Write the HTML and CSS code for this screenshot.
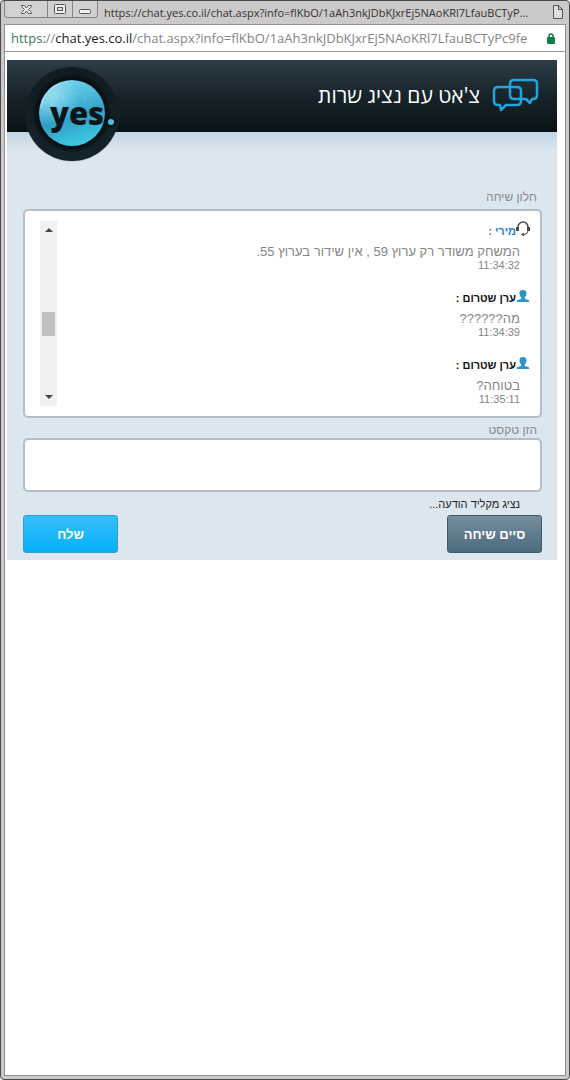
FILE: index.html
```html
<!DOCTYPE html>
<html lang="he">
<head>
  <meta charset="UTF-8">
  <title>צ'אט עם נציג שרות</title>
  <link rel="stylesheet" href="styles.css">
</head>
<body>
  <div class="window">
    <div class="titlebar">
      <div class="window-buttons">
        <button type="button" class="btn-close" aria-label="Close">
          <svg width="13" height="11" viewBox="0 0 13 11"><path d="M1.500 1.500h3l2 2.500 2-2.500h3v1l-3 3 3 3v1h-3l-2-2.500-2 2.500h-3v-1l3-3-3-3z" fill="#eee" stroke="#555"/></svg>
        </button>
        <button type="button" class="btn-max" aria-label="Maximize">
          <svg width="12" height="10" viewBox="0 0 12 10"><rect x=".5" y=".5" width="11" height="9" rx="1" fill="#eee" stroke="#555"/><rect x="3.500" y="3.500" width="5" height="3" fill="#ddd" stroke="#555"/></svg>
        </button>
        <button type="button" class="btn-min" aria-label="Minimize">
          <svg width="12" height="5" viewBox="0 0 12 5"><rect x=".5" y=".5" width="11" height="4" rx="1" fill="#eee" stroke="#555"/></svg>
        </button>
      </div>
      <span class="window-title">https://chat.yes.co.il/chat.aspx?info=flKbO/1aAh3nkJDbKJxrEj5NAoKRl7LfauBCTyP...</span>
      <svg class="page-icon" width="10" height="14" viewBox="0 0 10 14"><path d="M.5.5h5l4 4v9h-9zM5.500.5v4h4" fill="#ddd" stroke="#555"/></svg>
    </div>

    <div class="addressbar">
      <span class="url"><span class="secure">https:</span>//<span class="host">chat.yes.co.il</span>/chat.aspx?info=flKbO/1aAh3nkJDbKJxrEj5NAoKRl7LfauBCTyPc9fe</span>
      <svg class="lock" width="8" height="11" viewBox="0 0 8 11"><path d="M2 5V3a2 2 0 0 1 4 0v2" fill="none" stroke="#0b8043" stroke-width="1.500"/><rect y="4" width="8" height="7" rx="1" fill="#0b8043"/></svg>
    </div>

    <div class="viewport">
      <main class="chat" dir="rtl">
        <header class="chat-header">
          <svg class="bubbles" width="47" height="34" viewBox="0 0 47 34" fill="none" stroke="#1fa5e0" stroke-width="2.500" stroke-linejoin="round">
            <path d="M22 2h19q4 0 4 4v11q0 4-4 4h-1l-2 4-4-4H22q-4 0-4-4V6q0-4 4-4z"/>
            <path d="M6 9h19q4 0 4 4v10q0 4-4 4H14l-5 5-1-5H6q-4 0-4-4V13q0-4 4-4z"/>
          </svg>
          <h1>צ'אט עם נציג שרות</h1>
          <svg class="logo" width="100" height="100" viewBox="0 0 100 100" role="img" aria-label="yes">
            <defs>
              <linearGradient id="ring" x1="0" y1="0" x2="0" y2="1">
                <stop offset="0" stop-color="#101c21"/>
                <stop offset="1" stop-color="#14232b"/>
              </linearGradient>
              <radialGradient id="shade">
                <stop offset=".78" stop-color="#020608"/>
                <stop offset="1" stop-color="#020608" stop-opacity="0"/>
              </radialGradient>
              <linearGradient id="globe" x1=".3" y1="0" x2=".6" y2="1">
                <stop offset="0" stop-color="#79d2ed"/>
                <stop offset=".3" stop-color="#4fbcdc"/>
                <stop offset=".6" stop-color="#319fc6"/>
                <stop offset="1" stop-color="#3ecbe5"/>
              </linearGradient>
              <radialGradient id="shine" cx=".2" cy=".25" r=".4">
                <stop offset="0" stop-color="#c5f1fb" stop-opacity=".5"/>
                <stop offset="1" stop-color="#c5f1fb" stop-opacity="0"/>
              </radialGradient>
            </defs>
            <circle cx="49" cy="50" r="47" fill="#30506b" opacity=".15"/>
            <circle cx="49" cy="49" r="47" fill="url(#ring)"/>
            <circle cx="49" cy="48" r="40" fill="url(#shade)"/>
            <circle cx="49" cy="48" r="33" fill="url(#globe)"/>
            <circle cx="49" cy="48" r="33" fill="url(#shine)"/>
            <path d="M18 43A32 32 0 0 1 36 19" fill="none" stroke="#b3edfa" stroke-width="1" opacity=".8"/>
            <g fill="#b9edf8" opacity=".3">
              <circle cx="34" cy="32" r="1"/><circle cx="40" cy="33" r="1"/><circle cx="55" cy="28" r="1"/><circle cx="29" cy="39" r="1"/><circle cx="62" cy="33" r="1"/>
            </g>
            <text x="27" y="60" class="logo-text">yes</text>
            <circle cx="88" cy="57" r="6" fill="#0b151a"/>
            <circle cx="88" cy="57" r="3" fill="#4bbfe4"/>
          </svg>
        </header>

        <form class="chat-body">
          <h2 class="field-label">חלון שיחה</h2>
          <div class="log">
            <div class="messages">
              <div class="message agent">
                <div class="sender">
                  <svg width="14" height="16" viewBox="0 0 14 16" fill="none" stroke="#4a4a4a"><path d="M2 7V6a5 5 0 0 1 10 0v1" stroke-width="1.500"/><path d="M1.500 6v4M12.500 6v4" stroke-width="3"/><path d="M12 10q0 3-4 3.500" stroke-width="1"/><circle cx="7" cy="13.500" r="1" fill="#4a4a4a"/></svg>
                  <strong>מירי :</strong>
                </div>
                <p>המשחק משודר רק ערוץ 59 , אין שידור בערוץ 55.</p>
                <time>11:34:32</time>
              </div>
              <div class="message customer">
                <div class="sender">
                  <svg width="14" height="13" viewBox="0 0 14 13" fill="#2b95c9"><path d="M7 0C4.500 0 3.300 1.500 3.500 4c.2 1.500.9 2.600 1.700 3.300V9L1.500 10Q1 10.300.5 12h13q-.5-1.700-1-2L8.800 9V7.300c.8-.7 1.500-1.800 1.700-3.300C10.700 1.500 9.500 0 7 0z"/></svg>
                  <strong>ערן שטרום :</strong>
                </div>
                <p>מה??????</p>
                <time>11:34:39</time>
              </div>
              <div class="message customer">
                <div class="sender">
                  <svg width="14" height="13" viewBox="0 0 14 13" fill="#2b95c9"><path d="M7 0C4.500 0 3.300 1.500 3.500 4c.2 1.500.9 2.600 1.700 3.300V9L1.500 10Q1 10.300.5 12h13q-.5-1.700-1-2L8.800 9V7.300c.8-.7 1.500-1.800 1.700-3.300C10.700 1.500 9.500 0 7 0z"/></svg>
                  <strong>ערן שטרום :</strong>
                </div>
                <p>בטוחה?</p>
                <time>11:35:11</time>
              </div>
            </div>
            <div class="scrollbar" aria-hidden="true">
              <svg width="8" height="4" viewBox="0 0 8 4"><path d="M0 4l4-4 4 4z" fill="#444"/></svg>
              <div class="track"><div class="thumb"></div></div>
              <svg width="8" height="4" viewBox="0 0 8 4"><path d="M0 0l4 4 4-4z" fill="#444"/></svg>
            </div>
          </div>

          <label class="field-label" for="message">הזן טקסט</label>
          <textarea id="message" name="message"></textarea>
          <p class="typing">נציג מקליד הודעה...</p>

          <div class="actions">
            <button type="button" class="btn btn-end">סיים שיחה</button>
            <button type="submit" class="btn btn-send">שלח</button>
          </div>
        </form>
      </main>
    </div>
  </div>
</body>
</html>
```
FILE: styles.css
```css
* {
  box-sizing: border-box;
}
body {
  margin: 0;
  font-family: "Liberation Sans", Arial, sans-serif;
  background: #fff;
}
h1, h2, p {
  margin: 0;
  font-weight: normal;
}
svg {
  flex: none;
  display: block;
}

/* browser window */
.window {
  display: flex;
  flex-direction: column;
  min-height: 100vh;
  padding: 0 3px 3px;
  border: 1px solid #4c494a;
  border-radius: 4px;
  background: #cbc9c9;
}
.titlebar {
  display: flex;
  align-items: flex-start;
  height: 23px;
  padding-right: 3px;
}
.window-buttons {
  display: flex;
  flex: none;
  height: 17px;
  border: 1px solid #858383;
  border-top: 0;
  border-radius: 0 0 4px 4px;
  background: #d2d0d0;
}
.window-buttons button {
  display: flex;
  align-items: center;
  justify-content: center;
  width: 25px;
  padding: 0;
  border: 0;
  border-left: 1px solid #858383;
  background: none;
}
.window-buttons .btn-close {
  width: 42px;
  border-left: 0;
}
.window-buttons .btn-min {
  padding-top: 4px;
}
.window-title {
  flex: 1;
  margin: 3px 6px 0;
  overflow: hidden;
  white-space: nowrap;
  text-overflow: ellipsis;
  font-family: "Open Sans", sans-serif;
  font-size: 11px;
  line-height: 18px;
  color: #333;
}
.page-icon {
  margin-top: 4px;
}
.addressbar {
  display: flex;
  align-items: center;
  height: 28px;
  padding: 0 10px 0 6px;
  border: 1px solid #918f8f;
  background: #fff;
}
.url {
  flex: 1;
  overflow: hidden;
  white-space: nowrap;
  font-family: "Open Sans", sans-serif;
  font-size: 13px;
  line-height: 20px;
  color: #858585;
}
.secure {
  color: #3c7d58;
}
.host {
  color: #222;
}
.lock {
  margin-left: 9px;
}
.viewport {
  flex: 1;
  padding: 8px 8px 8px 2px;
  border: 1px solid #918f8f;
  border-top: 0;
  background: #fff;
}

/* chat */
.chat {
  max-width: 550px;
  background: #dce6ee;
}
.chat-header {
  position: relative;
  display: flex;
  align-items: center;
  gap: 12px;
  height: 72px;
  padding: 0 18px 2px;
  background: linear-gradient(#2d3c47, #18242a 50%, #091316);
}
.chat-header h1 {
  font-family: "Open Sans", sans-serif;
  font-size: 21px;
  color: #fff;
}
.logo {
  position: absolute;
  left: 16px;
  top: 5px;
}
.logo-text {
  direction: ltr;
  font: 800 31px "Open Sans", sans-serif;
  fill: #0b151a;
}
.chat-body {
  padding: 57px 15px 7px 16px;
  background: linear-gradient(#c3d5e4, #dce6ee 20px);
}
.field-label {
  display: block;
  padding: 0 5px;
  font-size: 12px;
  line-height: 16px;
  color: #858a8e;
}
.log {
  display: flex;
  justify-content: space-between;
  height: 209px;
  margin: 4px 0;
  padding: 10px 10px 10px 15px;
  border: 2px solid #b3bec5;
  border-radius: 5px;
  background: #fff;
}
.message {
  margin-bottom: 18px;
}
.message p {
  margin-top: 2px;
  padding-right: 10px;
  font-size: 13px;
  line-height: 17px;
  color: #858585;
}
.message time {
  display: block;
  padding-right: 10px;
  font-size: 11px;
  line-height: 10px;
  color: #858585;
}
.sender {
  display: flex;
  align-items: flex-start;
  height: 20px;
  font-size: 11px;
  line-height: 20px;
  color: #111;
}
.agent .sender {
  color: #2b83bd;
}
.customer svg {
  margin-top: 2px;
}
.scrollbar {
  display: flex;
  flex-direction: column;
  align-items: center;
  width: 17px;
  padding: 7px 0;
  background: #f0f0f0;
}
.track {
  flex: 1;
  width: 13px;
  padding-top: 80px;
}
.thumb {
  height: 24px;
  background: #c1c1c1;
}
textarea {
  display: block;
  width: 100%;
  height: 54px;
  padding: 6px;
  border: 2px solid #b3bec5;
  border-radius: 5px;
  background: #fff;
  font: inherit;
  resize: none;
}
.typing {
  padding: 3px 22px 2px;
  font-size: 11px;
  line-height: 18px;
  color: #222;
}
.actions {
  display: flex;
  justify-content: space-between;
}
.btn {
  width: 95px;
  height: 38px;
  padding: 0;
  border: 1px solid;
  border-radius: 3px;
  font: bold 13px "Liberation Sans", Arial, sans-serif;
  color: #fff;
  cursor: pointer;
}
.btn-end {
  border-color: #3f5a6b;
  background: linear-gradient(#758e9c, #4d6b7e);
}
.btn-send {
  border-color: #2e9fd6;
  background: linear-gradient(#35bff9, #06affa);
}
```
